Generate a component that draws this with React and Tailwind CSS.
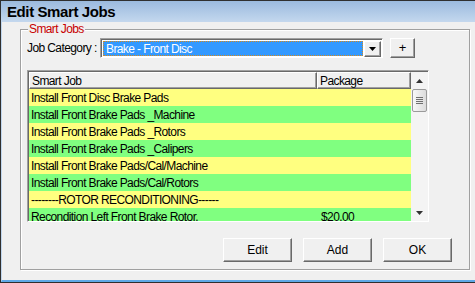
import React from 'react';

const rows = [
  { job: 'Install Front Disc Brake Pads', pkg: '' },
  { job: 'Install Front Brake Pads _Machine', pkg: '' },
  { job: 'Install Front Brake Pads _Rotors', pkg: '' },
  { job: 'Install Front Brake Pads _Calipers', pkg: '' },
  { job: 'Install Front Brake Pads/Cal/Machine', pkg: '' },
  { job: 'Install Front Brake Pads/Cal/Rotors', pkg: '' },
  { job: '--------ROTOR RECONDITIONING------', pkg: '' },
  { job: 'Recondition Left Front Brake Rotor.', pkg: '$20.00' },
];

// classic raised 3D button edge
const raised =
  'border border-t-[#fff] border-l-[#fff] border-r-[#696969] border-b-[#696969] shadow-[inset_-1px_-1px_0_#a0a0a0]';

function Button({ children, className = '' }) {
  return (
    <div className={`flex items-center justify-center bg-[#f0f0f0] text-black ${raised} ${className}`}>
      {children}
    </div>
  );
}

export default function App() {
  return (
    <div className="w-[475px] h-[283px] flex flex-col bg-[#f0f0f0] border-t border-l border-b border-[#2f2f2f] overflow-hidden font-['Liberation_Sans',sans-serif] text-[12px] tracking-[-0.6px] text-black">
      {/* title bar */}
      <div className="h-[21px] shrink-0 flex items-center pl-[6px] bg-gradient-to-b from-[#9bbade] to-[#c4d8ee]">
        <span className="text-[15px] font-bold tracking-[-0.4px] leading-none">Edit Smart Jobs</span>
      </div>

      {/* body */}
      <div className="flex-1 border-l border-[#c0d6ee] border-b-2 border-b-[#5fa8e6]">
        <div className="ml-[18px] mt-[7px] w-[450px] h-[241px] relative border border-[#a0a0a0] shadow-[1px_1px_0_#fff,inset_1px_1px_0_#fff] pt-[8px] pl-[6px]">
          <span className="absolute left-[7px] top-[-8px] px-[1px] bg-[#f0f0f0] text-[#c80000] leading-[14px]">Smart Jobs</span>

          {/* category row */}
          <div className="flex items-center h-[20px]">
            <span className="w-[73px]">Job Category :</span>
            <div className="w-[283px] h-[20px] flex border border-t-[#a0a0a0] border-l-[#a0a0a0] border-r-[#fff] border-b-[#fff] shadow-[inset_1px_1px_0_#696969] bg-white p-[1px] pl-[2px] pt-[2px]">
              <div className="flex-1 bg-[#3399ff] border border-dotted border-[#d88a1a] text-white flex items-center pl-[2px] leading-none">
                Brake - Front Disc
              </div>
              <Button className="w-[17px] h-[16px] ml-[1px]">
                <svg width="7" height="4" viewBox="0 0 7 4"><path d="M0 0h7L3.5 4z" fill="#000" /></svg>
              </Button>
            </div>
            <Button className="ml-[7px] w-[25px] h-[20px] text-[13px] tracking-normal">+</Button>
          </div>

          {/* list */}
          <div className="mt-[12px] w-[402px] h-[152px] flex border border-t-[#a0a0a0] border-l-[#a0a0a0] border-r-[#fff] border-b-[#fff]">
            <div className="flex-1 flex border-t border-l border-[#696969]">
              <div className="flex-1 flex flex-col overflow-hidden">
                <div className="h-[17px] shrink-0 flex">
                  <div className={`w-[288px] pl-[2px] flex items-center ${raised}`}>Smart Job</div>
                  <div className={`flex-1 pl-[2px] flex items-center ${raised}`}>Package</div>
                </div>
                {rows.map((r, i) => (
                  <div
                    key={i}
                    className={`h-[17px] shrink-0 flex items-center ${i % 2 === 0 ? 'bg-[#ffff80]' : 'bg-[#80ff80]'}`}
                  >
                    <span className="w-[288px] pl-[2px] whitespace-nowrap">{r.job}</span>
                    <span className="pl-[4px]">{r.pkg}</span>
                  </div>
                ))}
              </div>

              {/* scrollbar */}
              <div className="w-[17px] flex flex-col bg-[#f4f4f4]">
                <div className="h-[17px] flex items-center justify-center">
                  <svg width="7" height="4" viewBox="0 0 7 4"><path d="M3.5 0L7 4H0z" fill="#333" /></svg>
                </div>
                <div className="mx-[1px] h-[23px] rounded-[2px] border border-[#9a9a9a] bg-gradient-to-r from-[#f8f8f8] to-[#dcdcdc] flex flex-col items-center justify-center gap-[1px]">
                  <div className="w-[7px] h-[1px] bg-[#6f6f6f]" />
                  <div className="w-[7px] h-[1px] bg-[#6f6f6f]" />
                  <div className="w-[7px] h-[1px] bg-[#6f6f6f]" />
                  <div className="w-[7px] h-[1px] bg-[#6f6f6f]" />
                </div>
                <div className="flex-1" />
                <div className="h-[17px] flex items-center justify-center">
                  <svg width="7" height="4" viewBox="0 0 7 4"><path d="M0 0h7L3.5 4z" fill="#333" /></svg>
                </div>
              </div>
            </div>
          </div>

          {/* buttons */}
          <div className="mt-[16px] flex justify-end gap-[11px] mr-[17px] tracking-normal">
            <Button className="w-[69px] h-[24px]">Edit</Button>
            <Button className="w-[69px] h-[24px]">Add</Button>
            <Button className="w-[69px] h-[24px]">OK</Button>
          </div>
        </div>
      </div>
    </div>
  );
}
